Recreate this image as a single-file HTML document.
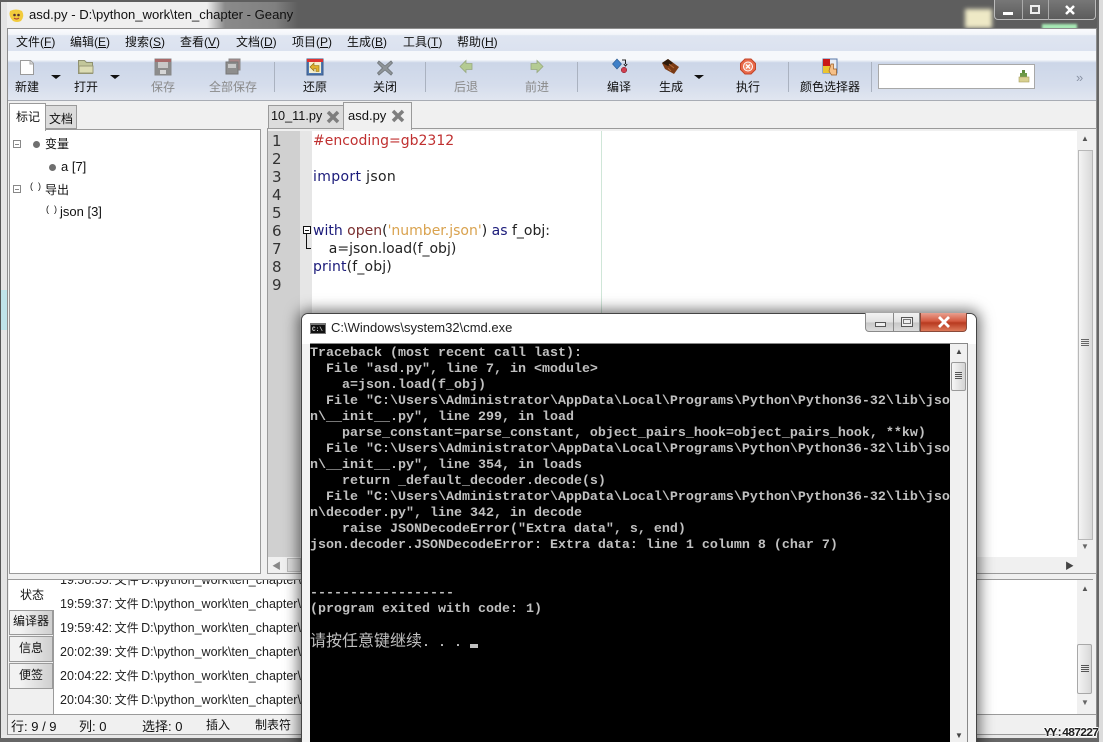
<!DOCTYPE html>
<html><head><meta charset="utf-8">
<style>
html,body{margin:0;padding:0;width:1103px;height:742px;overflow:hidden;background:#5e5e5e}
body{position:relative;font-family:"Liberation Sans","Noto Sans CJK SC",sans-serif;font-size:12px;color:#111}
.a{position:absolute;white-space:pre}
.b{position:absolute}
.c{transform:translateX(-50%)}
.dis{color:#8a8a8a}
.m u{text-decoration:underline}
.code{position:absolute;left:313px;font-family:"DejaVu Sans",sans-serif;font-size:14px;line-height:18px;white-space:pre;color:#222}
.ln{position:absolute;left:272px;font-family:"DejaVu Sans",sans-serif;font-size:15px;line-height:18px;color:#333;white-space:pre}
.kw{color:#1a1a7a}.bi{color:#7a2f2f}.st{color:#d9a24e}.cm{color:#c03030}
.msg{position:absolute;left:60px;font-size:12.5px;line-height:16px;white-space:pre;color:#222;word-spacing:-1px}
.msg span{font-size:12px}
.mt{position:absolute;left:9px;width:44px;text-align:center;background:linear-gradient(90deg,#f2f2f2 25%,#cfcfcf);border:1px solid #9a9a9a;box-sizing:border-box;font-size:12px}
</style></head><body>

<!-- frame -->
<div class="b" style="left:0;top:0;width:1103px;height:742px;background:#5e5e5e"></div>
<div class="b" style="left:0;top:2px;width:298px;height:26px;background:linear-gradient(90deg,#efefef 0,#efefef 207px,#8a8a8a 225px,#808080 275px,#5e5e5e 298px)"></div>
<div class="b" style="left:0;top:2px;width:7px;height:740px;background:#e4e4e4;border-left:1px solid #555;box-sizing:border-box"></div>
<div class="b" style="left:1px;top:290px;width:6px;height:40px;background:#bfe3ea"></div>
<div class="b" style="left:1px;top:735px;width:1097px;height:3px;background:#e8e8e8"></div>
<div class="b" style="left:0;top:738px;width:1103px;height:4px;background:#666"></div>
<div class="b" style="left:1097px;top:0;width:6px;height:742px;background:#dcdcdc;border-left:2px solid #666;box-sizing:border-box"></div>
<div class="b" style="left:965px;top:9px;width:27px;height:19px;background:#eee9c6;filter:blur(2px)"></div>
<div class="b" style="left:1042px;top:24px;width:35px;height:6px;background:#a6e8b4;filter:blur(1px)"></div>

<!-- title -->
<svg class="b" style="left:8px;top:8px" width="17" height="16" viewBox="0 0 17 16"><path d="M2 3q6-3 12 0 3 5-1 10-4 2-8 0Q0 8 2 3z" fill="#f2cb3c"/><circle cx="6.500" cy="7" r="1.300" fill="#533"/><circle cx="10.500" cy="7" r="1.300" fill="#533"/><path d="M6 10q2.500 2 5 0" stroke="#a33" fill="none"/></svg>
<div class="a" style="left:29px;top:7px;font-size:13.1px;line-height:16px;color:#111" id="ttl">asd.py - D:\python_work\ten_chapter - Geany</div>

<div class="b" style="left:994px;top:0;width:102px;height:20px;background:linear-gradient(#777,#5c5c5c);border:1px solid #bbb;border-top:0;border-radius:0 0 4px 4px;box-sizing:border-box"></div>
<div class="b" style="left:1022px;top:0;width:1px;height:20px;background:#aaa"></div>
<div class="b" style="left:1048px;top:0;width:1px;height:20px;background:#aaa"></div>
<div class="b" style="left:1003px;top:12px;width:10px;height:3px;background:#fff"></div>
<div class="b" style="left:1030px;top:5px;width:10px;height:9px;border:2px solid #eee;box-sizing:border-box"></div>
<svg class="b" style="left:1064px;top:4px" width="12" height="12"><path d="M2 2l8 8M10 2l-8 8" stroke="#fff" stroke-width="2.500"/></svg>

<!-- client -->
<div class="b" style="left:7px;top:28px;width:1090px;height:707px;background:#f0f0f0;border:1px solid #8d8d8d;box-sizing:border-box"></div>
<div class="b" style="left:8px;top:29px;width:1088px;height:22px;background:linear-gradient(#fafbfd 0,#f3f5fa 25%,#dfe5f1 30%,#dbe2ef 100%)"></div>
<div class="b" style="left:8px;top:51px;width:1088px;height:50px;background:linear-gradient(#f6f8fb 0,#f6f8fb 18%,#ccd6e8 24%,#d5ddec 70%,#e1e6f0 100%);border-bottom:1px solid #a8acb4;box-sizing:border-box"></div>

<!-- menu -->
<div class="m">
<div class="a" style="left:16px;top:33px">文件(<u>F</u>)</div>
<div class="a" style="left:70px;top:33px">编辑(<u>E</u>)</div>
<div class="a" style="left:125px;top:33px">搜索(<u>S</u>)</div>
<div class="a" style="left:180px;top:33px">查看(<u>V</u>)</div>
<div class="a" style="left:236px;top:33px">文档(<u>D</u>)</div>
<div class="a" style="left:292px;top:33px">项目(<u>P</u>)</div>
<div class="a" style="left:347px;top:33px">生成(<u>B</u>)</div>
<div class="a" style="left:403px;top:33px">工具(<u>T</u>)</div>
<div class="a" style="left:457px;top:33px">帮助(<u>H</u>)</div>
</div>

<!-- toolbar labels -->
<div class="a c" style="left:27px;top:78px">新建</div>
<div class="a c" style="left:86px;top:78px">打开</div>
<div class="a c dis" style="left:163px;top:78px">保存</div>
<div class="a c dis" style="left:233px;top:78px">全部保存</div>
<div class="a c" style="left:315px;top:78px">还原</div>
<div class="a c" style="left:385px;top:78px">关闭</div>
<div class="a c dis" style="left:466px;top:78px">后退</div>
<div class="a c dis" style="left:537px;top:78px">前进</div>
<div class="a c" style="left:619px;top:78px">编译</div>
<div class="a c" style="left:671px;top:78px">生成</div>
<div class="a c" style="left:748px;top:78px">执行</div>
<div class="a c" style="left:830px;top:78px">颜色选择器</div>

<!-- separators -->
<div class="b" style="left:274px;top:62px;width:1px;height:30px;background:#aab2c0"></div>
<div class="b" style="left:425px;top:62px;width:1px;height:30px;background:#aab2c0"></div>
<div class="b" style="left:577px;top:62px;width:1px;height:30px;background:#aab2c0"></div>
<div class="b" style="left:788px;top:62px;width:1px;height:30px;background:#aab2c0"></div>
<div class="b" style="left:871px;top:62px;width:1px;height:30px;background:#aab2c0"></div>

<!-- search box -->
<div class="b" style="left:878px;top:64px;width:157px;height:25px;background:#fff;border:1px solid #a8a8a8;box-sizing:border-box"></div>

<!-- toolbar icons -->
<svg class="b" style="left:0;top:52px" width="1103" height="38" viewBox="0 52 1103 38">
<path d="M20.500 60.500h10l3 3v11h-13z" fill="#fdfdfd" stroke="#9a9a9a"/>
<path d="M30 60.500v3.500h3.500" fill="#ddd" stroke="#aaa"/>
<path d="M51 75h10l-5 4z" fill="#111"/>
<path d="M110 75h10l-5 4z" fill="#111"/>
<path d="M694 75h10l-5 4z" fill="#111"/>
<path d="M78.500 60.500h6l2 2h6v11h-14z" fill="#c2c69a" stroke="#8e9070"/>
<rect x="79" y="66" width="14" height="7" fill="#dcdcb4" stroke="#9a9a78"/>
<rect x="155" y="59" width="16" height="16" fill="#8c8c8c" stroke="#888"/>
<rect x="155" y="59" width="16" height="3" fill="#a86a6a"/>
<rect x="158" y="62" width="10" height="6" fill="#c8c8c8"/>
<rect x="160" y="70" width="6" height="4" fill="#d6d6d6"/>
<rect x="229" y="59" width="11" height="11" fill="#a88" stroke="#888"/>
<rect x="226" y="62" width="12" height="12" fill="#8e8e8e" stroke="#777"/>
<rect x="228" y="64" width="8" height="4" fill="#c8c8c8"/>
<rect x="307" y="59" width="16" height="16" fill="#4f78b0" stroke="#3a5a8a"/>
<rect x="307" y="59" width="16" height="3" fill="#d33"/>
<rect x="309" y="62" width="12" height="11" fill="#f6f0d0"/>
<path d="M310 67l4-4v2.500h5v6h-3v-3h-2v2.500z" fill="#e0b030" stroke="#8a6a10" stroke-width=".6"/>
<path d="M379 61l6 5 6-5 1.500 2-5 5 5 5-1.500 2-6-5-6 5-1.500-2 5-5-5-5z" fill="#8e9498" stroke="#70767a" stroke-width=".8"/>
<path d="M460 66.500l6-6v3h6v6h-6v3z" fill="#b4cb92" stroke="#98a880" stroke-width=".8"/>
<path d="M543 66.500l-6-6v3h-6v6h6v3z" fill="#b4cb92" stroke="#98a880" stroke-width=".8"/>
<path d="M617 59l4.500 5-4.500 5-4.500-5z" fill="#3f80c8" stroke="#2a5a90" stroke-width=".6"/>
<path d="M622 60h3.500v4M623.800 64l1.700 2 1.700-2" fill="none" stroke="#222"/>
<circle cx="624" cy="70" r="2.800" fill="#d04050" stroke="#802030" stroke-width=".5"/>
<path d="M662 63l6-4 11 8-5 7-9-5z" fill="#7a3a14"/>
<path d="M662 63l6-4 5 4-5 3z" fill="#2e1a0a"/>
<path d="M669 64l5 4M668 68l3 3" stroke="#b36a3a"/>
<path d="M745 59h6l4.500 4.500v6L751 74h-6l-4.500-4.500v-6z" fill="#e8694a" stroke="#c24428"/>
<circle cx="748" cy="66.500" r="4.500" fill="#f08a6c" stroke="#fff"/>
<path d="M746 64.500l4 4M750 64.500l-4 4" stroke="#fff" stroke-width="1.300"/>
<rect x="823" y="59" width="14" height="14" fill="#e8ecf4" stroke="#5878a8"/>
<rect x="823" y="59" width="7" height="7" fill="#c81818"/>
<rect x="823" y="66" width="7" height="7" fill="#eac430"/>
<path d="M831 64h2.500v5h3v6h-5l-2.500-4z" fill="#f6c088" stroke="#9a5a20" stroke-width=".7"/>
<rect x="1022" y="70" width="3" height="4" fill="#5d8a3c"/>
<rect x="1020" y="73" width="7" height="4" fill="#6e9a48"/>
<rect x="1019" y="77" width="10" height="5" fill="#d8d090" stroke="#a8a060" stroke-width=".6"/>
</svg>
<div class="a" style="left:1076px;top:70px;font-size:13px;color:#8a93a5">»</div>

<!-- left tabs & panel -->
<div class="b" style="left:45px;top:105px;width:32px;height:24px;background:#dcdcdc;border:1px solid #9a9a9a;box-sizing:border-box"></div>
<div class="a" style="left:49px;top:110px">文档</div>
<div class="b" style="left:9px;top:129px;width:252px;height:445px;background:#fff;border:1px solid #9a9a9a;box-sizing:border-box"></div>
<div class="b" style="left:9px;top:103px;width:37px;height:28px;background:#fff;border:1px solid #9a9a9a;border-bottom:0;box-sizing:border-box"></div>
<div class="a" style="left:16px;top:108px">标记</div>

<!-- tree -->
<div class="b" style="left:13px;top:140px;width:8px;height:8px;border:1px solid #888;box-sizing:border-box;background:linear-gradient(#888,#888) center/4px 1px no-repeat #fff"></div>
<div class="b" style="left:13px;top:185px;width:8px;height:8px;border:1px solid #888;box-sizing:border-box;background:linear-gradient(#888,#888) center/4px 1px no-repeat #fff"></div>
<div class="b" style="left:33px;top:141px;width:7px;height:7px;border-radius:50%;background:#6f6f6f"></div>
<div class="b" style="left:49px;top:164px;width:7px;height:7px;border-radius:50%;background:#6f6f6f"></div>
<div class="a" style="left:45px;top:135px">变量</div>
<div class="a" style="left:61px;top:159px;font-size:13px">a [7]</div>
<div class="a" style="left:30px;top:181px;font-size:9px">(  )</div>
<div class="a" style="left:45px;top:181px">导出</div>
<div class="a" style="left:46px;top:204px;font-size:9px">(  )</div>
<div class="a" style="left:60px;top:204px;font-size:13px">json [3]</div>

<!-- editor tabs -->
<div class="b" style="left:268px;top:105px;width:76px;height:24px;background:#dcdcdc;border:1px solid #9a9a9a;box-sizing:border-box"></div>
<div class="a" style="left:271px;top:109px;font-size:12.7px">10_11.py</div>
<div class="b" style="left:267px;top:128px;width:830px;height:446px;background:#f0f0f0;border:1px solid #9a9a9a;box-sizing:border-box"></div>
<div class="b" style="left:343px;top:102px;width:69px;height:28px;background:#f0f0f0;border:1px solid #9a9a9a;border-bottom:0;box-sizing:border-box"></div>
<div class="a" style="left:348px;top:108px;font-size:13px">asd.py</div>
<svg class="b" style="left:326px;top:110px" width="14" height="14"><path d="M2 2l10 10M12 2L2 12" stroke="#7e7e7e" stroke-width="3.500"/></svg>
<svg class="b" style="left:391px;top:109px" width="14" height="14"><path d="M2 2l10 10M12 2L2 12" stroke="#7e7e7e" stroke-width="3.500"/></svg>

<!-- editor -->
<div class="b" style="left:268px;top:131px;width:809px;height:426px;background:#fff"></div>
<div class="b" style="left:268px;top:131px;width:32px;height:426px;background:#d0d0d0"></div>
<div class="b" style="left:300px;top:131px;width:12px;height:426px;background:#e6e6e6"></div>
<div class="b" style="left:601px;top:131px;width:1px;height:426px;background:#cfe6d8"></div>
<div class="ln" style="top:132px">1
2
3
4
5
6
7
8
9</div>
<div class="code" style="top:132px"><span class="cm">#encoding=gb2312</span>

<span style="letter-spacing:.35px"><span class="kw">import</span> json</span>


<span class="kw">with</span> <span class="bi">open</span>(<span class="st">'number.json'</span>) <span class="kw">as</span> f_obj:
<span style="margin-left:-2px">    a=json.load(f_obj)</span>
<span style="letter-spacing:.15px"><span class="kw">print</span>(f_obj)</span>
</div>
<div class="b" style="left:303px;top:226px;width:8px;height:8px;border:1px solid #111;box-sizing:border-box;background:linear-gradient(#111,#111) center/4px 1px no-repeat #fff"></div>
<div class="b" style="left:306px;top:234px;width:1px;height:14px;background:#111"></div>
<div class="b" style="left:306px;top:248px;width:5px;height:1px;background:#111"></div>

<!-- editor scrollbars -->
<div class="b" style="left:1077px;top:131px;width:16px;height:442px;background:#f0f0f0"></div>
<div class="b" style="left:1078px;top:150px;width:15px;height:390px;background:linear-gradient(90deg,#f4f4f4,#d8d8d8);border:1px solid #b8b8b8;box-sizing:border-box"></div>
<div class="b" style="left:1081px;top:339px;width:8px;height:7px;background:repeating-linear-gradient(#666 0 1px,transparent 1px 2px)"></div>
<div class="a" style="left:1081px;top:134px;font-size:8px;color:#555">▲</div>
<div class="a" style="left:1081px;top:542px;font-size:8px;color:#666">▼</div>
<div class="b" style="left:268px;top:557px;width:809px;height:16px;background:#f0f0f0"></div>
<div class="a" style="left:272px;top:559px;font-size:9px;color:#888">◀</div>
<div class="b" style="left:287px;top:558px;width:14px;height:14px;background:#dcdcdc;border:1px solid #bbb;box-sizing:border-box"></div>
<div class="a" style="left:1065px;top:559px;font-size:9px;color:#444">▶</div>

<!-- message window -->
<div class="b" style="left:8px;top:579px;width:1085px;height:135px;background:#fff;border-top:1px solid #9a9a9a;box-sizing:border-box"></div>
<div class="b" style="left:8px;top:580px;width:46px;height:134px;background:#f0f0f0;border-right:1px solid #9a9a9a;box-sizing:border-box"></div>
<div class="b" style="left:9px;top:580px;width:45px;height:30px;background:#fff"></div>
<div class="a" style="left:20px;top:586px">状态</div>
<div class="mt" style="top:610px;height:25px;line-height:20px">编译器</div>
<div class="mt" style="top:636px;height:26px;line-height:22px">信息</div>
<div class="mt" style="top:663px;height:26px;line-height:22px">便签</div>
<div class="b" style="left:55px;top:580px;width:1022px;height:134px;overflow:hidden">
<div class="msg" style="left:5px;top:-8px">19:58:55: <span>文件</span> D:\python_work\ten_chapter\asd.py 已保存。</div>
<div class="msg" style="left:5px;top:16px">19:59:37: <span>文件</span> D:\python_work\ten_chapter\asd.py 已保存。</div>
<div class="msg" style="left:5px;top:40px">19:59:42: <span>文件</span> D:\python_work\ten_chapter\asd.py 已保存。</div>
<div class="msg" style="left:5px;top:64px">20:02:39: <span>文件</span> D:\python_work\ten_chapter\asd.py 已保存。</div>
<div class="msg" style="left:5px;top:88px">20:04:22: <span>文件</span> D:\python_work\ten_chapter\asd.py 已保存。</div>
<div class="msg" style="left:5px;top:112px">20:04:30: <span>文件</span> D:\python_work\ten_chapter\asd.py 已保存。</div>
</div>
<div class="b" style="left:1077px;top:580px;width:16px;height:134px;background:#f0f0f0"></div>
<div class="b" style="left:1077px;top:644px;width:15px;height:50px;background:linear-gradient(90deg,#f4f4f4,#d8d8d8);border:1px solid #a8a8a8;border-radius:2px;box-sizing:border-box"></div>
<div class="b" style="left:1081px;top:665px;width:8px;height:7px;background:repeating-linear-gradient(#555 0 1px,transparent 1px 2px)"></div>
<div class="a" style="left:1081px;top:584px;font-size:8px;color:#555">▲</div>
<div class="a" style="left:1081px;top:698px;font-size:8px;color:#666">▼</div>

<!-- status -->
<div class="b" style="left:8px;top:714px;width:1088px;height:21px;background:#f0f0f0;border-top:1px solid #9a9a9a;border-bottom:1px solid #9a9a9a;box-sizing:border-box"></div>
<div class="a" style="left:11px;top:716px;font-size:13px">行: 9 / 9</div>
<div class="a" style="left:79px;top:716px;font-size:13px">列: 0</div>
<div class="a" style="left:142px;top:716px;font-size:13px">选择: 0</div>
<div class="a" style="left:206px;top:716px">插入</div>
<div class="a" style="left:255px;top:716px">制表符</div>

<!-- watermark -->
<div class="a" style="left:1044px;top:727px;font-family:'Liberation Mono',monospace;font-weight:bold;font-size:12px;line-height:13px;color:#222;letter-spacing:-1.2px;text-shadow:1px 0 #fff,-1px 0 #fff,0 1px #fff,0 -1px #fff">YY:487227</div>

<!-- cmd window -->
<div class="b" style="left:301px;top:313px;width:676px;height:440px;background:#f3f3f3;border:1px solid #444;border-radius:7px 7px 0 0;box-sizing:border-box;box-shadow:0 0 14px 3px rgba(0,0,0,.55)"></div>
<div class="b" style="left:302px;top:314px;width:674px;height:30px;background:#fff;border-radius:6px 6px 0 0"></div>
<div class="b" style="left:310px;top:323px;width:16px;height:11px;background:#111;border:1px solid #777;box-sizing:border-box;border-top-width:2px"></div>
<div class="a" style="left:312px;top:326px;font-family:'Liberation Mono',monospace;font-size:6px;line-height:7px;color:#ddd;font-weight:bold">C:\</div>
<div class="a" style="left:331px;top:320px;font-size:13px;line-height:16px;color:#222" id="cmdt">C:\Windows\system32\cmd.exe</div>
<div class="b" style="left:865px;top:313px;width:55px;height:19px;background:linear-gradient(#f2f2f2,#e2e2e2 50%,#c8c8c8 55%,#dcdcdc);border:1px solid #8a8a8a;border-top:0;border-radius:0 0 0 4px;box-sizing:border-box"></div>
<div class="b" style="left:893px;top:313px;width:1px;height:19px;background:#888"></div>
<div class="b" style="left:875px;top:322px;width:11px;height:5px;border:1px solid #555;box-sizing:border-box;background:#eee"></div>
<div class="b" style="left:901px;top:317px;width:12px;height:10px;border:1px solid #555;box-sizing:border-box;background:#eee"></div>
<div class="b" style="left:903px;top:319px;width:8px;height:5px;border:1px solid #777;box-sizing:border-box"></div>
<div class="b" style="left:920px;top:313px;width:47px;height:19px;background:linear-gradient(#e8a090,#d45a40 45%,#b83a20 55%,#dd7a5a);border:1px solid #8a4a3a;border-top:0;border-radius:0 0 4px 0;box-sizing:border-box"></div>
<svg class="b" style="left:937px;top:316px" width="14" height="12"><path d="M2 1l10 10M12 1L2 11" stroke="#fff" stroke-width="2.800"/></svg>

<div class="b" style="left:310px;top:343px;width:658px;height:399px;border:1px solid #888;border-bottom:0;box-sizing:border-box"></div>
<div class="b" style="left:310px;top:344px;width:640px;height:398px;background:#000"></div>
<div class="b" style="left:950px;top:344px;width:17px;height:398px;background:#f0f0f0"></div>
<div class="b" style="left:951px;top:362px;width:15px;height:29px;background:linear-gradient(90deg,#f6f6f6,#d4d4d4);border:1px solid #999;border-radius:2px;box-sizing:border-box"></div>
<div class="b" style="left:955px;top:372px;width:7px;height:8px;background:repeating-linear-gradient(#555 0 1px,transparent 1px 2px)"></div>
<div class="a" style="left:955px;top:347px;font-size:8px;color:#444">▲</div>
<div class="a" style="left:955px;top:731px;font-size:8px;color:#444">▼</div>

<div class="a" style="left:310px;top:346px;font-family:'Liberation Mono',monospace;font-weight:bold;font-size:13.33px;line-height:16px;color:#c0c0c0">Traceback (most recent call last):
  File "asd.py", line 7, in &lt;module&gt;
    a=json.load(f_obj)
  File "C:\Users\Administrator\AppData\Local\Programs\Python\Python36-32\lib\jso
n\__init__.py", line 299, in load
    parse_constant=parse_constant, object_pairs_hook=object_pairs_hook, **kw)
  File "C:\Users\Administrator\AppData\Local\Programs\Python\Python36-32\lib\jso
n\__init__.py", line 354, in loads
    return _default_decoder.decode(s)
  File "C:\Users\Administrator\AppData\Local\Programs\Python\Python36-32\lib\jso
n\decoder.py", line 342, in decode
    raise JSONDecodeError("Extra data", s, end)
json.decoder.JSONDecodeError: Extra data: line 1 column 8 (char 7)


------------------
(program exited with code: 1)</div>
<div class="a" style="left:310px;top:630px;font-family:'Noto Sans CJK SC',sans-serif;font-size:16px;line-height:18px;color:#c0c0c0">请按任意键继续</div>
<div class="a" style="left:422px;top:636px;font-family:'Liberation Mono',monospace;font-weight:bold;font-size:13.33px;line-height:16px;color:#c0c0c0">. . . </div>
<div class="b" style="left:470px;top:644px;width:8px;height:4px;background:#c0c0c0"></div>
</body></html>
